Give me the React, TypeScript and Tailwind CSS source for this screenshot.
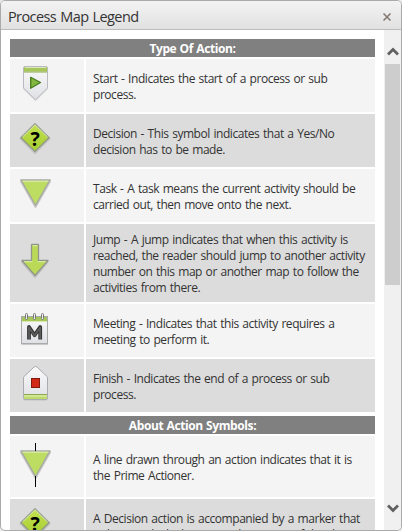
import type { ReactNode } from "react";

const Diamond = () => (
  <svg width="34" height="36" viewBox="0 0 34 36" className="block">
    <path d="M17 3.5 31 17.5 17 31.5 3 17.5Z" fill="#bbb" stroke="#bbb" strokeWidth="3" strokeLinejoin="round" opacity=".7" />
    <path d="M17 3 31 16.8 17 30.6 3 16.8Z" fill="url(#diamondFill)" stroke="#929a87" strokeWidth="1.4" strokeLinejoin="round" />
    <path d="M4.5 16 17 3.8 29.5 16" fill="none" stroke="#dcefa8" strokeWidth="1" />
    <text x="17.2" y="24.5" textAnchor="middle" fontFamily="Open Sans, sans-serif" fontWeight="700" fontSize="19.5" fill="#000">?</text>
  </svg>
);

const Triangle = () => (
  <>
    <path d="M3 4.5H32L17.5 30Z" fill="#aaa" stroke="#aaa" strokeWidth="2" strokeLinejoin="round" opacity=".55" />
    <path d="M3 3H32L17.5 28.5Z" fill="#bddc62" stroke="#a6a9a1" strokeWidth="1.5" strokeLinejoin="round" />
    <path d="M4.5 4.2H30.5" stroke="#e1f0b7" strokeWidth="1" />
  </>
);

const StartIcon = () => (
  <svg width="30" height="38" viewBox="0 0 30 38" className="block">
    <path d="M4 3H27Q28 3 28 4V25L15.5 37.3 3 25V4Q3 3 4 3Z" fill="#ccc" opacity=".7" />
    <path d="M5 2.5H26Q27.5 2.5 27.5 4V24L15.5 35.8 3.5 24V4Q3.5 2.5 5 2.5Z" fill="url(#paper)" stroke="#b9babf" />
    <path d="M4 3H27V7.5H4Z" fill="#a7c75a" />
    <path d="M5 3.5H26" stroke="#dce8bb" />
    <path d="M4 8H27" stroke="#8aa84a" />
    <path d="M10.7 13.3 20.5 18.5 10.7 24.2Z" fill="#82b83f" stroke="#477b1e" strokeWidth="1.3" strokeLinejoin="round" />
  </svg>
);

const Arrow = () => (
  <svg width="32" height="38" viewBox="0 0 32 38" className="block">
    <path d="M13 4H19V20H28.5L16 35 3 20H13Z" fill="#aaa" stroke="#aaa" strokeWidth="2" strokeLinejoin="round" opacity=".5" />
    <path d="M12.5 3Q12.5 2.5 13 2.5H19Q19.5 2.5 19.5 3V18.5H29L16 33.5 3 18.5H12.5Z" fill="#b9d957" stroke="#91968b" strokeWidth="1.3" strokeLinejoin="round" />
    <path d="M13.5 3.7H18.5M5 19.7H13.5M18.5 19.7H27" stroke="#ddefac" />
  </svg>
);

const Meeting = () => (
  <svg width="30" height="36" viewBox="0 0 30 36" className="block">
    <rect x="1.5" y="5.5" width="26.5" height="27.5" fill="#aaa" opacity=".6" />
    <rect x="1.5" y="4.5" width="26" height="27" fill="url(#paper)" stroke="#aaa" />
    <rect x="2" y="5" width="25" height="4" fill="#a6c75b" />
    <path d="M2 9.5H27" stroke="#d8e8a8" />
    <g fill="#eee" stroke="#777"><rect x="5.5" y="1.5" width="2" height="6" rx="1" /><rect x="13.5" y="1.5" width="2" height="6" rx="1" /><rect x="21.5" y="1.5" width="2" height="6" rx="1" /></g>
    <path d="M9 27.5V15L14.6 23.2 20.2 15V27.5" fill="none" stroke="#333" strokeWidth="3.8" strokeLinejoin="round" />
    <path d="M9 27V15.5L14.6 23.5 20.2 15.5V27" fill="none" stroke="#5c5c5c" strokeWidth="1.8" strokeLinejoin="round" />
  </svg>
);

const Finish = () => (
  <svg width="30" height="38" viewBox="0 0 30 38" className="block">
    <path d="M3 34V14L13.5 3.5Q15.5 2 17.5 3.5L28 14V34Q28 36.5 26 36.5H5Q3 36.5 3 34Z" fill="#aaa" opacity=".5" />
    <path d="M3.5 33V13L14 3Q15.5 1.8 17 3L27.5 13V33.5Q27.5 35.5 26 35.5H5Q3.5 35.5 3.5 33.5Z" fill="url(#paper)" stroke="#a9abb1" />
    <path d="M4 30.5H27V35H4Z" fill="#bddb6c" />
    <path d="M4 30.5H27" stroke="#8da753" />
    <path d="M4 32H27" stroke="#e4f2b9" />
    <rect x="11.5" y="14.5" width="8" height="9" fill="#d12716" stroke="#83190f" />
  </svg>
);

const Line = ({ children }: { children: string }) => (
  <span className="block w-max tracking-[-0.45px] whitespace-nowrap [word-spacing:0.95px]">{children}</span>
);

const Row = ({ icon, height, dark, pad, children }: { icon: ReactNode; height: string; dark?: boolean; pad: string; children: ReactNode }) => (
  <div className={`mb-0.5 grid shrink-0 grid-cols-[74px_289px] gap-0.5 ${height}`}>
    <div className={`overflow-hidden ${pad} ${dark ? "bg-[#dcdcdc]" : "bg-[#f4f4f4]"}`}>{icon}</div>
    <div className={`flex flex-col justify-center overflow-hidden pt-0.5 pl-[7px] ${dark ? "bg-[#dcdcdc]" : "bg-[#f4f4f4]"}`}>{children}</div>
  </div>
);

const Heading = ({ children }: { children: string }) => (
  <div className="mb-0.5 flex h-[18px] shrink-0 items-center justify-center bg-[#808080] pt-px text-[12px] leading-4 font-bold tracking-[-0.4px] text-white [word-spacing:0.6px]">
    {children}
  </div>
);

export default function App() {
  return (
    <div className="h-[531px] w-[402px] overflow-hidden bg-[#e8e8e8] font-['Open_Sans','Noto_Sans',sans-serif] text-[12px] leading-4 text-[#333]">
      <svg width="0" height="0" className="absolute">
        <defs>
          <linearGradient id="paper" x2="0" y2="1"><stop stopColor="#fafafa" /><stop offset="1" stopColor="#dfe0e5" /></linearGradient>
          <linearGradient id="diamondFill" x2="0" y2="1"><stop stopColor="#c4e052" /><stop offset="1" stopColor="#a5ce2d" /></linearGradient>
        </defs>
      </svg>
      <div className="flex h-[531px] flex-col overflow-hidden rounded-[5px] border border-[#aaa] bg-white">
        <header className="flex h-[29px] shrink-0 items-center justify-between border-b border-[#bcbcbc] bg-linear-to-b from-[#f3f3f3] to-[#e1e1e1] pr-[10px] pl-[7px]">
          <h1 className="pt-[3px] text-[14.5px] leading-5 tracking-[-0.6px] whitespace-nowrap [word-spacing:1px]">Process Map Legend</h1>
          <svg width="8" height="8" viewBox="0 0 8 8" className="mt-1"><path d="M.5.5l7 7m0-7-7 7" stroke="#81756f" strokeWidth="1.5" /></svg>
        </header>
        <div className="flex min-h-0 grow justify-between">
          <main className="flex w-[374px] flex-col overflow-hidden pt-[9px] pl-[9px]">
            <Heading>Type Of Action:</Heading>
            <Row height="h-[53px]" pad="pt-[5px] pl-[10px]" icon={<StartIcon />}>
              <Line>Start - Indicates the start of a process or sub</Line>
              <Line>process.</Line>
            </Row>
            <Row dark height="h-[53px]" pad="pt-[7px] pl-[8px]" icon={<Diamond />}>
              <Line>Decision - This symbol indicates that a Yes/No</Line>
              <Line>decision has to be made.</Line>
            </Row>
            <Row height="h-[53px]" pad="pt-[8px] pl-[8px]" icon={<svg width="35" height="34" className="block"><Triangle /></svg>}>
              <Line>Task - A task means the current activity should be</Line>
              <Line>carried out, then move onto the next.</Line>
            </Row>
            <Row dark height="h-[78px]" pad="pt-[18px] pl-[9px]" icon={<Arrow />}>
              <Line>Jump - A jump indicates that when this activity is</Line>
              <Line>reached, the reader should jump to another activity</Line>
              <Line>number on this map or another map to follow the</Line>
              <Line>activities from there.</Line>
            </Row>
            <Row height="h-[53px]" pad="pt-[8px] pl-[10px]" icon={<Meeting />}>
              <Line>Meeting - Indicates that this activity requires a</Line>
              <Line>meeting to perform it.</Line>
            </Row>
            <Row dark height="h-[53px]" pad="pt-[5px] pl-[10px]" icon={<Finish />}>
              <Line>Finish - Indicates the end of a process or sub</Line>
              <Line>process.</Line>
            </Row>
            <div className="h-0.5 shrink-0" />
            <Heading>About Action Symbols:</Heading>
            <Row height="h-[61px]" pad="pt-[7px] pl-[8px]" icon={
              <svg width="35" height="46" className="block">
                <g transform="translate(0 5)"><Triangle /></g>
                <path d="M17.5 0V8M17.5 33V44" stroke="#000" />
              </svg>
            }>
              <Line>A line drawn through an action indicates that it is</Line>
              <Line>the Prime Actioner.</Line>
            </Row>
            <Row dark height="h-[53px]" pad="pt-[7px] pl-[8px]" icon={<Diamond />}>
              <Line>A Decision action is accompanied by a marker that</Line>
              <Line>indicates which decision is the parent of the decision</Line>
            </Row>
          </main>
          <aside className="flex w-[17px] flex-col items-center justify-between bg-[#f0f0f0] pt-[17px] pb-[17px]">
            <div className="flex flex-col items-center gap-[8px]">
              <svg width="12" height="9" viewBox="0 0 12 9" className="block"><path d="M1 7.5 6 2.5 11 7.5" fill="none" stroke="#606060" strokeWidth="2.7" /></svg>
              <div className="h-[221px] w-[15px] bg-[#cdcdcd]" />
            </div>
            <svg width="12" height="9" viewBox="0 0 12 9" className="block"><path d="M1 1.5 6 6.5 11 1.5" fill="none" stroke="#606060" strokeWidth="2.7" /></svg>
          </aside>
        </div>
      </div>
    </div>
  );
}
